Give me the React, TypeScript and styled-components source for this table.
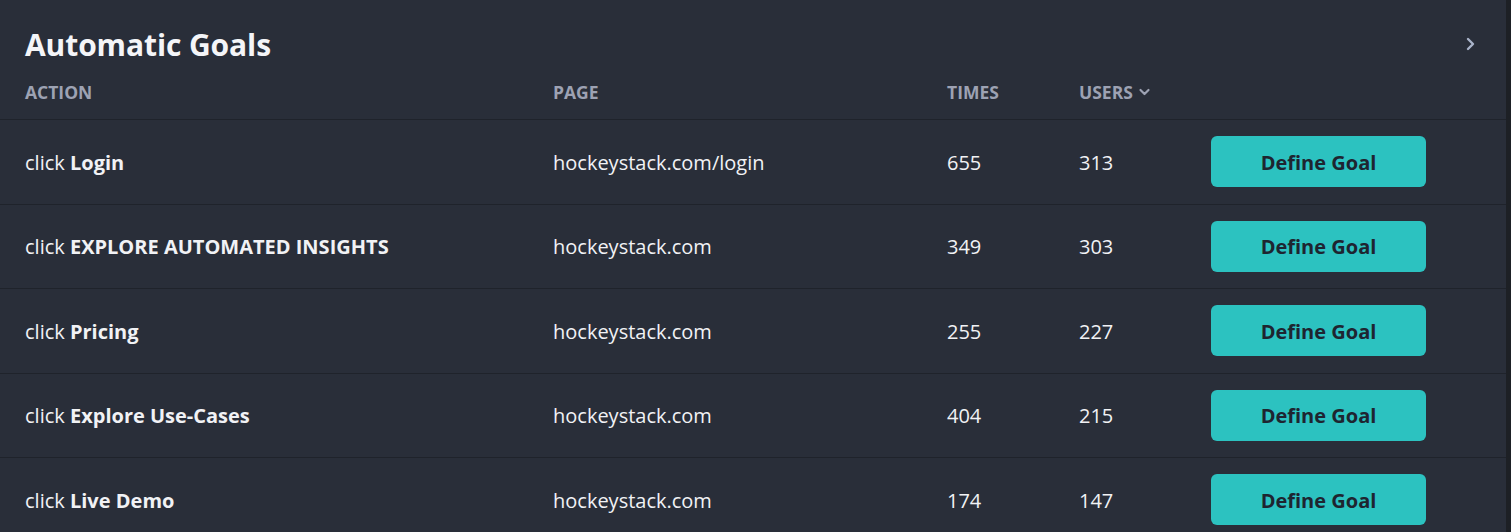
import React from "react";
import styled, { createGlobalStyle } from "styled-components";

const GlobalStyle = createGlobalStyle`
  html, body {
    margin: 0;
    padding: 0;
    background: #1d2025;
    font-family: "Open Sans", "Noto Sans", sans-serif;
  }
`;

const Panel = styled.section`
  width: calc(100% - 5px);
  height: 532px;
  background: #292e39;
  color: #f1f2f5;
  overflow: hidden;
`;

const TitleBar = styled.div`
  height: 56px;
  padding: 16px 31px 0 25px;
  display: flex;
  align-items: center;
  justify-content: space-between;
`;

const Title = styled.h2`
  margin: 0;
  font-size: 30px;
  font-weight: 700;
  letter-spacing: -0.1px;
  color: #f4f5f8;
`;

const MoreButton = styled.button`
  background: none;
  border: none;
  padding: 0;
  display: flex;
  color: #a9b3c9;
  cursor: pointer;
`;

const Row = styled.div<{ $head?: boolean }>`
  display: grid;
  grid-template-columns: 528px 394px 132px 132px 1fr;
  align-items: center;
  box-sizing: border-box;
  padding-left: 25px;
  border-bottom: 1px solid #1f232b;
  height: ${(p) => (p.$head ? "48px" : "84.5px")};
  ${(p) => (p.$head ? "align-items: start; padding-top: 8px;" : "")}
`;

const HeadCell = styled.div`
  font-size: 17.5px;
  font-weight: 700;
  line-height: 24px;
  color: #9da2b3;
  text-transform: uppercase;
  display: flex;
  align-items: center;
  gap: 5px;
`;

const Cell = styled.div`
  font-size: 20px;
  line-height: 26px;
  padding-top: 2px;
  color: #f1f2f5;
  white-space: nowrap;

  b {
    font-weight: 700;
  }
`;

const DefineButton = styled.button`
  width: 215px;
  height: 51px;
  padding-top: 2px;
  border: none;
  border-radius: 6px;
  background: #2cc2c0;
  color: #1e2530;
  font-family: inherit;
  font-size: 20px;
  font-weight: 700;
  cursor: pointer;
`;

const goals = [
  { action: "Login", page: "hockeystack.com/login", times: 655, users: 313 },
  { action: "EXPLORE AUTOMATED INSIGHTS", page: "hockeystack.com", times: 349, users: 303 },
  { action: "Pricing", page: "hockeystack.com", times: 255, users: 227 },
  { action: "Explore Use-Cases", page: "hockeystack.com", times: 404, users: 215 },
  { action: "Live Demo", page: "hockeystack.com", times: 174, users: 147 },
];

const ChevronRight = () => (
  <svg width="10" height="16" viewBox="0 0 10 16" fill="none">
    <path d="M3 3l5 5-5 5" stroke="currentColor" strokeWidth="2.4" strokeLinecap="round" strokeLinejoin="round" />
  </svg>
);

const ChevronDown = () => (
  <svg width="13" height="12" viewBox="0 0 13 12" fill="none">
    <path d="M2.5 4l4 4 4-4" stroke="currentColor" strokeWidth="2.2" strokeLinecap="round" strokeLinejoin="round" />
  </svg>
);

export default function App() {
  return (
    <>
      <GlobalStyle />
      <Panel>
        <TitleBar>
          <Title>Automatic Goals</Title>
          <MoreButton aria-label="More">
            <ChevronRight />
          </MoreButton>
        </TitleBar>
        <Row $head>
          <HeadCell>Action</HeadCell>
          <HeadCell>Page</HeadCell>
          <HeadCell>Times</HeadCell>
          <HeadCell>
            Users <ChevronDown />
          </HeadCell>
          <div />
        </Row>
        {goals.map((g) => (
          <Row key={g.action}>
            <Cell>
              click <b>{g.action}</b>
            </Cell>
            <Cell>{g.page}</Cell>
            <Cell>{g.times}</Cell>
            <Cell>{g.users}</Cell>
            <div>
              <DefineButton>Define Goal</DefineButton>
            </div>
          </Row>
        ))}
      </Panel>
    </>
  );
}
